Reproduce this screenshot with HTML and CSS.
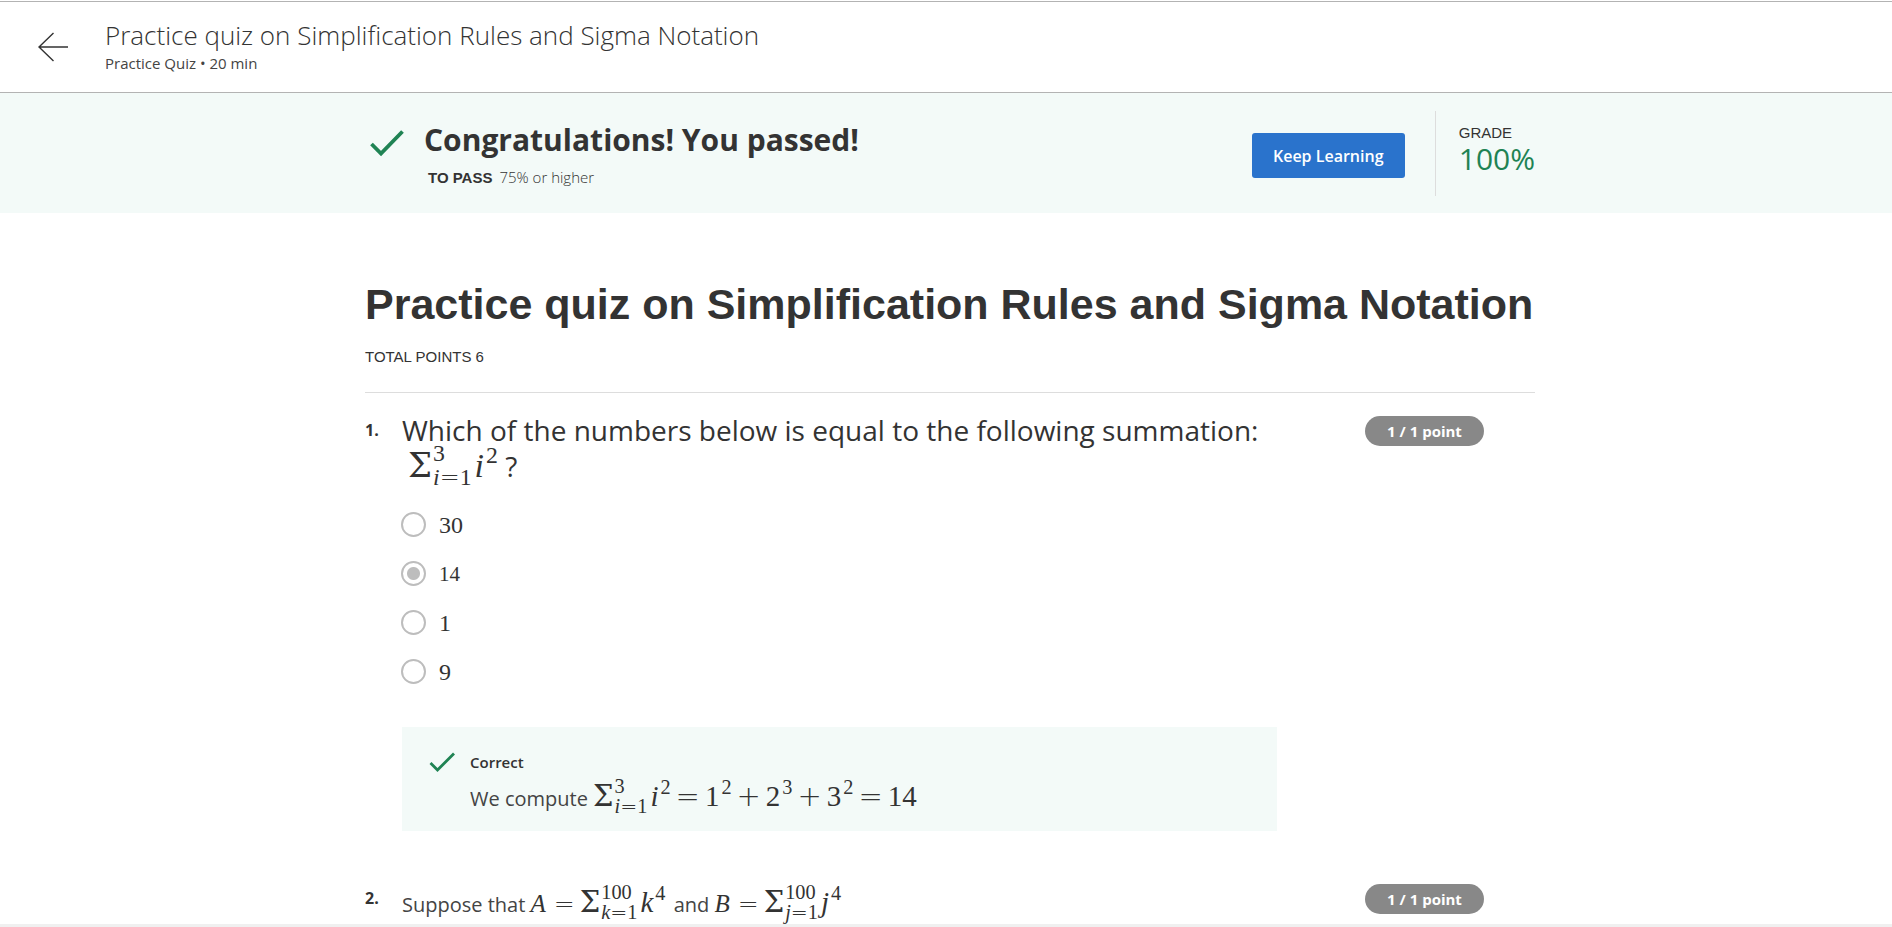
FILE: index.html
```
<!DOCTYPE html>
<html lang="en">
<head>
<meta charset="utf-8">
<meta name="viewport" content="width=device-width, initial-scale=1">
<title>Practice quiz on Simplification Rules and Sigma Notation</title>
<link rel="stylesheet" href="styles.css">
</head>
<body>
<header class="topbar">
  <button class="back" type="button" aria-label="Back">
    <svg width="30" height="30" viewBox="0 0 30 30" fill="none" stroke="#333" stroke-width="1.4"><path d="M15.500 1 1 15l14.500 14M1 15h29"/></svg>
  </button>
  <div>
    <div class="topbar-title">Practice quiz on Simplification Rules and Sigma Notation</div>
    <div class="topbar-sub">Practice Quiz • 20 min</div>
  </div>
</header>

<section class="banner">
  <div class="container banner-row">
    <svg class="banner-check" width="34" height="27" viewBox="0 0 34 27" fill="none" stroke="#1f8354" stroke-width="3.800"><path d="M1.500 14 11 23.500 32.500 1.500"/></svg>
    <div class="banner-text">
      <h2 class="banner-title">Congratulations! You passed!</h2>
      <p class="pass"><span class="pass-label">TO PASS</span>75% or higher</p>
    </div>
    <button class="keep" type="button">Keep Learning</button>
    <div class="grade">
      <div class="grade-label">GRADE</div>
      <div class="grade-value">100%</div>
    </div>
  </div>
</section>

<main class="content">
  <div class="container">
    <h1 class="quiz-title">Practice quiz on Simplification Rules and Sigma Notation</h1>
    <p class="total">TOTAL POINTS 6</p>
    <hr class="rule">

    <section class="question">
      <div class="number">1.</div>
      <div class="body">
        <p class="prompt" id="q1">Which of the numbers below is equal to the following summation:
          <span class="math math-lg"><span class="sigma">Σ</span><span class="scripts"><span>3</span><span><i>i</i><b>=</b>1</span></span><i>i</i><sup>2</sup></span> ?</p>
        <div class="options" role="radiogroup" aria-labelledby="q1">
          <label class="option"><input type="radio" name="q1" disabled><span>30</span></label>
          <label class="option"><input type="radio" name="q1" checked disabled><span class="chosen">14</span></label>
          <label class="option"><input type="radio" name="q1" disabled><span>1</span></label>
          <label class="option"><input type="radio" name="q1" disabled><span>9</span></label>
        </div>
        <div class="feedback">
          <svg class="feedback-check" width="26" height="20" viewBox="0 0 26 20" fill="none" stroke="#1f8354" stroke-width="2.800"><path d="M1.500 11 8.500 18 25 1.500"/></svg>
          <div>
            <div class="verdict">Correct</div>
            <p class="explain">We compute <span class="math"><span class="sigma">Σ</span><span class="scripts"><span>3</span><span><i>i</i><b>=</b>1</span></span><i>i</i><sup>2</sup><b class="op">=</b>1<sup>2</sup><b class="op">+</b>2<sup>3</sup><b class="op">+</b>3<sup>2</sup><b class="op">=</b>14</span></p>
          </div>
        </div>
      </div>
      <div class="badge">1 / 1 point</div>
    </section>

    <section class="question">
      <div class="number">2.</div>
      <div class="body">
        <p class="prompt-sm">Suppose that <span class="math math-sm"><i>A</i><b class="op">=</b></span><span class="math term"><span class="sigma">Σ</span><span class="scripts"><span>100</span><span><i>k</i><b>=</b>1</span></span><i>k</i><sup>4</sup></span> and <span class="math math-sm"><i>B</i><b class="op">=</b></span><span class="math"><span class="sigma">Σ</span><span class="scripts"><span>100</span><span><i>j</i><b>=</b>1</span></span><i>j</i><sup>4</sup></span></p>
      </div>
      <div class="badge">1 / 1 point</div>
    </section>
  </div>
</main>
<footer class="strip"></footer>
</body>
</html>
```
FILE: styles.css
```
* { box-sizing: border-box; }
body {
  margin: 0;
  height: 100vh;
  display: flex;
  flex-direction: column;
  overflow: hidden;
  background: #fff;
  color: #333;
  font-family: "Open Sans", "Noto Sans", sans-serif;
}
h1, h2, p { margin: 0; }
button { font-family: inherit; cursor: pointer; }

.topbar {
  flex: none;
  display: flex;
  align-items: center;
  gap: 37px;
  height: 92px;
  margin-top: 1px;
  padding: 0 38px;
  border-top: 1px solid #b3b3b3;
  border-bottom: 1px solid #b3b3b3;
}
.back { display: flex; padding: 0; border: 0; background: none; }
.topbar-title { margin-bottom: 2px; font-size: 26px; line-height: 30px; font-weight: 300; }
.topbar-sub { color: #444; font-size: 15px; line-height: 22px; }

.container { width: 100%; max-width: 1170px; margin: 0 auto; }

.banner { flex: none; padding: 18px 0 17px 8px; background: #f3faf8; }
.banner-row { display: flex; align-items: center; }
.banner-check { flex: none; margin: 0 20px 20px 5px; }
.banner-text { flex: 1; padding-top: 2px; }
.banner-title { font-size: 30px; line-height: 42px; font-weight: 700; }
.pass { margin-top: 4px; padding-left: 4px; font-size: 15px; line-height: 24px; font-weight: 300; }
.pass-label { margin-right: 7px; font-family: "Liberation Sans", sans-serif; font-weight: 700; }
.keep {
  width: 153px;
  height: 45px;
  margin-top: 4px;
  border: 0;
  border-radius: 3px;
  background: #2a73cc;
  color: #fff;
  font-size: 16px;
  font-weight: 600;
}
.grade { height: 85px; margin-left: 30px; padding: 12px 0 0 23px; border-left: 1px solid #ddd; }
.grade-label { font: 15px/20px "Liberation Sans", sans-serif; }
.grade-value { font-size: 30px; line-height: 32px; color: #1f8354; }

.content { flex: 1; min-height: 0; overflow: hidden; padding: 64px 0 0 8px; }
.quiz-title { font: 700 43px/54px "Liberation Sans", sans-serif; }
.total { margin-top: 16px; font: 15px/20px "Liberation Sans", sans-serif; }
.rule { height: 1px; margin: 25px 0 18px; border: 0; background: #ddd; }

.question { display: flex; align-items: flex-start; margin-bottom: 48px; }
.number { flex: none; width: 37px; padding-top: 8px; font-size: 16px; line-height: 22px; font-weight: 700; }
.body { flex: 1; }
.badge {
  flex: none;
  width: 119px;
  height: 30px;
  margin: 5px 51px 0 88px;
  border-radius: 15px;
  background: #888;
  color: #fff;
  font-size: 15px;
  line-height: 30px;
  font-weight: 700;
  text-align: center;
}
.prompt { padding-top: 1px; font-size: 28px; line-height: 36px; }

.math { font-family: "Liberation Serif", serif; font-size: 29px; line-height: 1; white-space: nowrap; }
.math-lg { margin-left: 6px; font-size: 34px; }
.math-sm { font-size: 25px; }
.math sup { margin-left: 2px; font-size: 70%; line-height: 0; vertical-align: 0.6em; }
.math b { font-family: "DejaVu Sans Light", "DejaVu Sans", sans-serif; font-weight: 200; line-height: 0; }
.math .op { margin: 0 5px; }
.math-sm i { margin-right: 3px; }
.term { margin-right: 3px; }
.sigma { font-family: "DejaVu Serif", serif; line-height: 0; }
.scripts {
  display: inline-flex;
  flex-direction: column;
  margin: -15px 3px -9px 1px;
  vertical-align: middle;
  font-size: 70%;
  line-height: 1;
}

.options { margin-top: 16px; }
.option { display: flex; align-items: center; gap: 13px; height: 49px; margin-left: -1px; font: 24px/28px "Liberation Serif", serif; }
.option input {
  appearance: none;
  width: 25px;
  height: 25px;
  margin: 0;
  border: 2px solid #bdbdbd;
  border-radius: 50%;
}
.option input:checked { background: radial-gradient(circle, #bdbdbd 6px, transparent 7px); }
.chosen { font-size: 21px; }

.feedback { display: flex; gap: 15px; height: 104px; margin-top: 31px; padding: 24px 27px; background: #f3faf8; }
.feedback-check { flex: none; margin-top: 1px; }
.verdict { font-size: 15px; line-height: 22px; font-weight: 600; }
.explain { margin-top: 4px; }
.explain, .prompt-sm { color: #444; font-size: 20px; line-height: 44px; }
.explain .math, .prompt-sm .math { color: #333; }
.prompt-sm { padding-top: 4px; }

.strip { flex: none; height: 3px; background: #f0f0f0; }
```
